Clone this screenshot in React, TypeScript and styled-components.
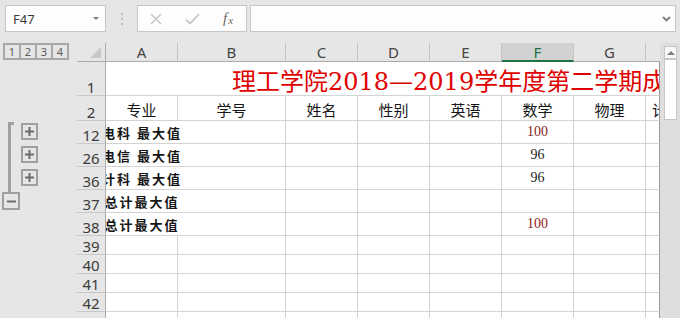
import React from 'react';
import styled, { createGlobalStyle } from 'styled-components';

const GlobalStyle = createGlobalStyle`
  html, body { margin: 0; padding: 0; background: #e6e6e6; }
  body { width: 680px; height: 318px; overflow: hidden; font-family: "Noto Sans", "Liberation Sans", sans-serif; }
`;

const Window = styled.div`
  width: 680px;
  height: 318px;
  display: flex;
  flex-direction: column;
  background: #e6e6e6;
  overflow: hidden;
`;

const FormulaBar = styled.div`
  flex: 0 0 43px;
  height: 43px;
  box-sizing: border-box;
  padding: 5px 4px 0 5px;
  display: flex;
  align-items: flex-start;
`;

const NameBox = styled.div`
  width: 101px;
  height: 27px;
  box-sizing: border-box;
  border: 1px solid #c6c6c6;
  background: #fdfdfd;
  display: flex;
  align-items: center;
  justify-content: space-between;
  padding: 0 6px 0 7px;
  font-size: 13px;
  color: #3a3a3a;
`;

const DropTriangle = styled.span`
  width: 0;
  height: 0;
  border-left: 3px solid transparent;
  border-right: 3px solid transparent;
  border-top: 3px solid #7a7a7a;
`;

const Grip = styled.div`
  width: 31px;
  height: 27px;
  display: flex;
  flex-direction: column;
  align-items: center;
  justify-content: center;
  gap: 3px;
`;

const GripDot = styled.span`
  width: 2px;
  height: 2px;
  background: #bdbdbd;
`;

const FxBox = styled.div`
  width: 110px;
  height: 27px;
  box-sizing: border-box;
  border: 1px solid #c6c6c6;
  background: #fdfdfd;
  display: flex;
`;

const IconSlot = styled.div`
  width: 36px;
  display: flex;
  align-items: center;
  justify-content: center;
`;

const FxLabel = styled.span`
  font-family: "Liberation Serif", "DejaVu Serif", serif;
  font-style: italic;
  font-size: 15px;
  color: #6a6a6a;
  line-height: 1;
`;

const FxSub = styled.span`
  font-size: 11px;
  position: relative;
  top: 1px;
  margin-left: 1px;
`;

const FormulaInput = styled.div`
  flex: 1;
  margin-left: 3px;
  height: 27px;
  box-sizing: border-box;
  border: 1px solid #c6c6c6;
  background: #fdfdfd;
  display: flex;
  align-items: center;
  justify-content: flex-end;
  padding-right: 4px;
`;

const Main = styled.div`
  flex: 1;
  display: flex;
  min-height: 0;
`;

const OutlinePane = styled.div`
  flex: 0 0 77px;
  width: 77px;
  display: flex;
  flex-direction: column;
`;

const LevelBar = styled.div`
  flex: 0 0 19px;
  height: 19px;
  display: flex;
  align-items: flex-start;
  padding-left: 3px;
`;

const LevelButton = styled.div`
  width: 18px;
  height: 17px;
  box-sizing: border-box;
  border: 2px solid #a8a8a8;
  display: flex;
  align-items: center;
  justify-content: center;
  font-size: 11px;
  color: #5c5c5c;
  & + & { margin-left: -2px; }
`;

const OutlineSpacer = styled.div<{ $h: number }>`
  flex: 0 0 ${p => p.$h}px;
`;

const GroupRow = styled.div`
  display: flex;
  align-items: flex-start;
`;

const Bracket = styled.div`
  margin: 1px 0 0 8px;
  width: 6px;
  height: 70px;
  box-sizing: border-box;
  border-left: 3px solid #a0a0a0;
  border-top: 3px solid #a0a0a0;
`;

const PlusColumn = styled.div`
  margin-left: 7px;
  padding-top: 2px;
  display: flex;
  flex-direction: column;
  gap: 6px;
`;

const ToggleButton = styled.div<{ $size: number; $offset?: number }>`
  width: ${p => p.$size}px;
  height: ${p => p.$size}px;
  margin-left: ${p => p.$offset ?? 0}px;
  box-sizing: border-box;
  border: 2px solid #a0a0a0;
  display: flex;
  align-items: center;
  justify-content: center;
`;

const Sheet = styled.div`
  flex: 0 0 583px;
  width: 583px;
  display: flex;
  flex-direction: column;
  overflow: hidden;
`;

const HeaderRow = styled.div`
  flex: 0 0 19px;
  height: 19px;
  display: flex;
`;

const Corner = styled.div`
  flex: 0 0 29px;
  box-sizing: border-box;
  border-right: 1px solid #ababab;
  border-bottom: 1px solid #ababab;
  display: flex;
  align-items: flex-end;
  justify-content: flex-end;
  padding: 0 4px 3px 0;
`;

const CornerTriangle = styled.span`
  width: 0;
  height: 0;
  border-left: 11px solid transparent;
  border-bottom: 11px solid #c6c6c6;
`;

const HeaderStrip = styled.div`
  flex: 1;
  min-width: 0;
  display: flex;
  overflow: hidden;
`;

const ColHeader = styled.div<{ $w: number; $selected?: boolean }>`
  flex: 0 0 ${p => p.$w}px;
  min-width: 0;
  box-sizing: border-box;
  border-right: 1px solid #c4c4c4;
  border-bottom: ${p => (p.$selected ? '2px solid #217346' : '1px solid #ababab')};
  background: ${p => (p.$selected ? '#d2d2d2' : 'transparent')};
  color: ${p => (p.$selected ? '#217346' : '#444')};
  display: flex;
  align-items: center;
  justify-content: center;
  padding-top: ${p => (p.$selected ? '1px' : '0')};
  font-size: 15px;
  line-height: 17px;
`;

const Row = styled.div<{ $h: number }>`
  flex: 0 0 ${p => p.$h}px;
  height: ${p => p.$h}px;
  display: flex;
`;

const RowHeader = styled.div`
  flex: 0 0 29px;
  box-sizing: border-box;
  border-right: 1px solid #ababab;
  border-bottom: 1px solid #c8c8c8;
  display: flex;
  align-items: flex-end;
  justify-content: center;
  font-size: 15px;
  line-height: 1;
  color: #3c3c3c;
`;

const Strip = styled.div`
  flex: 1;
  min-width: 0;
  display: flex;
  box-sizing: border-box;
  background: #fff;
  border-bottom: 1px solid #d4d4d4;
  border-right: 1px solid #9a9a9a;
  overflow: hidden;
`;

const Title = styled.div`
  padding: 0 0 1px 126px;
  align-self: flex-end;
  white-space: nowrap;
  font-family: "DejaVu Serif", "Noto Sans CJK SC", serif;
  font-size: 24px;
  line-height: 1;
  color: #e00000;
`;

type Align = 'center' | 'bottom';

const Cell = styled.div<{ $w: number; $line?: boolean; $align?: Align }>`
  flex: 0 0 ${p => p.$w}px;
  min-width: 0;
  box-sizing: border-box;
  border-right: ${p => (p.$line === false ? 'none' : '1px solid #d4d4d4')};
  display: flex;
  justify-content: center;
  align-items: ${p => (p.$align === 'center' ? 'center' : 'flex-end')};
  white-space: nowrap;
  line-height: 1;
`;

const HeadText = styled.span`
  font-family: "Noto Sans CJK SC", sans-serif;
  font-size: 15px;
  color: #161616;
  padding-bottom: 3px;
`;

const LabelText = styled.span`
  font-family: "Noto Sans CJK SC", sans-serif;
  font-size: 13px;
  font-weight: 700;
  letter-spacing: 2px;
  color: #151515;
  padding-bottom: 4px;
`;

const NumText = styled.span<{ $red?: boolean }>`
  font-family: "Liberation Serif", "Times New Roman", serif;
  font-size: 14px;
  color: ${p => (p.$red ? '#8e1b1b' : '#222')};
`;

const ScrollBar = styled.div`
  flex: 0 0 20px;
  width: 20px;
  background: #dedede;
  display: flex;
  flex-direction: column;
  padding: 3px 0 0 4px;
  box-sizing: border-box;
`;

const ScrollTop = styled.div`
  width: 13px;
  height: 13px;
  box-sizing: border-box;
  border: 1px solid #c6c6c6;
  background: #f8f8f8;
  display: flex;
  align-items: center;
  justify-content: center;
`;

const UpTriangle = styled.span`
  width: 0;
  height: 0;
  border-left: 4px solid transparent;
  border-right: 4px solid transparent;
  border-bottom: 4px solid #7d7d7d;
`;

const Thumb = styled.div`
  width: 13px;
  height: 61px;
  box-sizing: border-box;
  border: 1px solid #c6c6c6;
  background: #fff;
`;

const columns = [
  { key: 'A', w: 72, label: '专业' },
  { key: 'B', w: 108, label: '学号' },
  { key: 'C', w: 72, label: '姓名' },
  { key: 'D', w: 72, label: '性别' },
  { key: 'E', w: 72, label: '英语' },
  { key: 'F', w: 72, label: '数学' },
  { key: 'G', w: 72, label: '物理' },
  { key: 'H', w: 58, label: '计算机' },
];

type RowDef = {
  n: number;
  h: number;
  kind: 'title' | 'head' | 'data' | 'empty';
  a?: string;
  f?: string;
  red?: boolean;
};

const rows: RowDef[] = [
  { n: 1, h: 34, kind: 'title' },
  { n: 2, h: 25, kind: 'head' },
  { n: 12, h: 23, kind: 'data', a: '电科 最大值', f: '100', red: true },
  { n: 26, h: 23, kind: 'data', a: '电信 最大值', f: '96' },
  { n: 36, h: 23, kind: 'data', a: '计科 最大值', f: '96' },
  { n: 37, h: 23, kind: 'data', a: '总计最大值' },
  { n: 38, h: 23, kind: 'data', a: '总计最大值', f: '100', red: true },
  { n: 39, h: 19, kind: 'empty' },
  { n: 40, h: 19, kind: 'empty' },
  { n: 41, h: 19, kind: 'empty' },
  { n: 42, h: 19, kind: 'empty' },
  { n: 43, h: 19, kind: 'empty' },
];

const PlusIcon = () => (
  <svg width="9" height="9" viewBox="0 0 9 9">
    <path d="M3.5 0h2v9h-2zM0 3.5h9v2H0z" fill="#6b6b6b" />
  </svg>
);

const MinusIcon = () => (
  <svg width="9" height="9" viewBox="0 0 9 9">
    <path d="M0 3.5h9v2H0z" fill="#6b6b6b" />
  </svg>
);

function renderStrip(r: RowDef) {
  if (r.kind === 'title') {
    return <Title>理工学院2018—2019学年度第二学期成绩统计</Title>;
  }
  return columns.map(c => {
    if (r.kind === 'head') {
      return (
        <Cell key={c.key} $w={c.w}>
          <HeadText>{c.label}</HeadText>
        </Cell>
      );
    }
    if (r.kind === 'data' && c.key === 'A') {
      return (
        <Cell key={c.key} $w={c.w} $line={false}>
          <LabelText>{r.a}</LabelText>
        </Cell>
      );
    }
    if (r.kind === 'data' && c.key === 'F' && r.f) {
      return (
        <Cell key={c.key} $w={c.w} $align="center">
          <NumText $red={r.red}>{r.f}</NumText>
        </Cell>
      );
    }
    return <Cell key={c.key} $w={c.w} />;
  });
}

export default function App() {
  return (
    <>
      <GlobalStyle />
      <Window>
        <FormulaBar>
          <NameBox>
            <span>F47</span>
            <DropTriangle />
          </NameBox>
          <Grip>
            <GripDot />
            <GripDot />
            <GripDot />
          </Grip>
          <FxBox>
            <IconSlot>
              <svg width="12" height="12" viewBox="0 0 12 12">
                <path d="M1 1L11 11M11 1L1 11" stroke="#c2c2c2" strokeWidth="1.4" />
              </svg>
            </IconSlot>
            <IconSlot>
              <svg width="15" height="12" viewBox="0 0 15 12">
                <path d="M1 6.5L5 10.5L14 1" stroke="#c2c2c2" strokeWidth="1.6" fill="none" />
              </svg>
            </IconSlot>
            <IconSlot>
              <FxLabel>
                f<FxSub>x</FxSub>
              </FxLabel>
            </IconSlot>
          </FxBox>
          <FormulaInput>
            <svg width="9" height="6" viewBox="0 0 9 6">
              <path d="M1 1L4.5 4.5L8 1" stroke="#7a7a7a" strokeWidth="1.8" fill="none" />
            </svg>
          </FormulaInput>
        </FormulaBar>
        <Main>
          <OutlinePane>
            <LevelBar>
              {[1, 2, 3, 4].map(l => (
                <LevelButton key={l}>{l}</LevelButton>
              ))}
            </LevelBar>
            <OutlineSpacer $h={59} />
            <GroupRow>
              <Bracket />
              <PlusColumn>
                <ToggleButton $size={17}>
                  <PlusIcon />
                </ToggleButton>
                <ToggleButton $size={17}>
                  <PlusIcon />
                </ToggleButton>
                <ToggleButton $size={17}>
                  <PlusIcon />
                </ToggleButton>
              </PlusColumn>
            </GroupRow>
            <ToggleButton $size={18} $offset={2}>
              <MinusIcon />
            </ToggleButton>
          </OutlinePane>
          <Sheet>
            <HeaderRow>
              <Corner>
                <CornerTriangle />
              </Corner>
              <HeaderStrip>
                {columns.map(c => (
                  <ColHeader key={c.key} $w={c.w} $selected={c.key === 'F'}>
                    {c.key}
                  </ColHeader>
                ))}
              </HeaderStrip>
            </HeaderRow>
            {rows.map(r => (
              <Row key={r.n} $h={r.h}>
                <RowHeader>{r.n}</RowHeader>
                <Strip>{renderStrip(r)}</Strip>
              </Row>
            ))}
          </Sheet>
          <ScrollBar>
            <ScrollTop>
              <UpTriangle />
            </ScrollTop>
            <Thumb />
          </ScrollBar>
        </Main>
      </Window>
    </>
  );
}
